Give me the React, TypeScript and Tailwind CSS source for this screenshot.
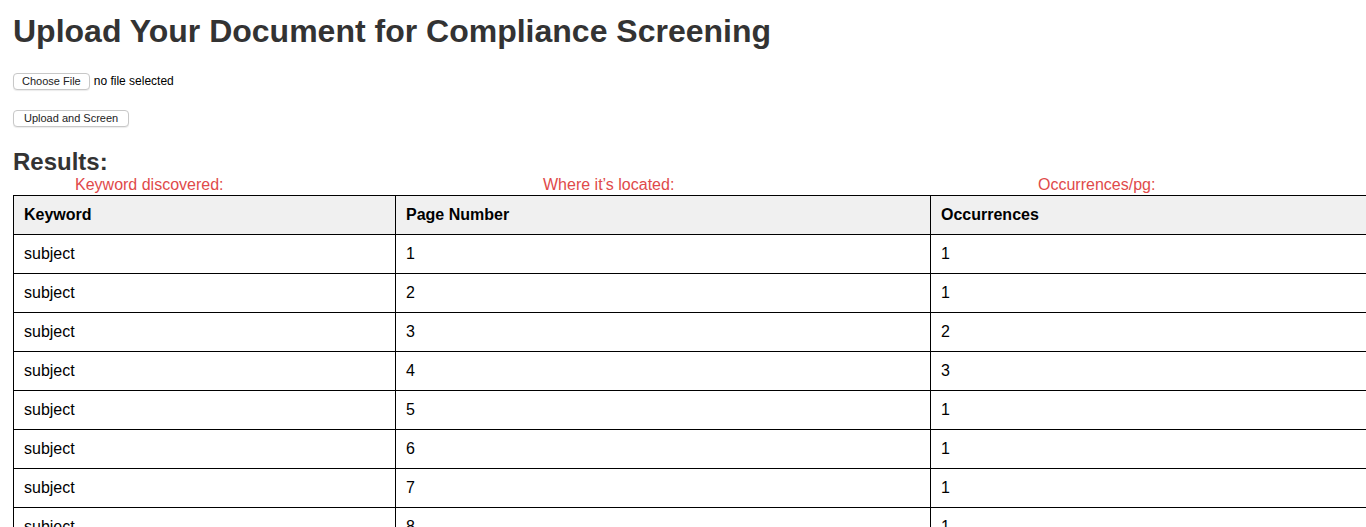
import React from "react"

const rows = [
  { keyword: "subject", page: 1, count: 1 },
  { keyword: "subject", page: 2, count: 1 },
  { keyword: "subject", page: 3, count: 2 },
  { keyword: "subject", page: 4, count: 3 },
  { keyword: "subject", page: 5, count: 1 },
  { keyword: "subject", page: 6, count: 1 },
  { keyword: "subject", page: 7, count: 1 },
  { keyword: "subject", page: 8, count: 1 },
]

const btn =
  "h-[17px] px-[8px] rounded-[4px] border border-[#c8c8c8] bg-white text-[11px] leading-none text-[#222] shadow-[0_1px_1px_rgba(0,0,0,0.08)]"

export default function App() {
  return (
    <div className="min-h-screen bg-white px-[13px] pt-[13px] text-[#333] font-['Liberation_Sans',Arial,sans-serif] overflow-hidden">
      <h1 className="text-[32px] font-bold leading-[37px] text-[#333]">
        Upload Your Document for Compliance Screening
      </h1>

      {/* file picker */}
      <div className="mt-[22px] flex items-center gap-[4px] text-[12px] text-black">
        <button className={btn}>Choose File</button>
        <span>no file selected</span>
      </div>

      <div className="mt-[15px]">
        <button className={`${btn} px-[10px] text-[11.5px]`}>Upload and Screen</button>
      </div>

      <h2 className="mt-[19px] text-[24px] font-bold leading-[28px] text-[#333]">Results:</h2>

      {/* annotations */}
      <div className="flex text-[16px] leading-[18px] text-[#e04a4a] mt-[0px]">
        <span className="ml-[62px] w-[468px]">Keyword discovered:</span>
        <span className="w-[495px]">Where it’s located:</span>
        <span>Occurrences/pg:</span>
      </div>

      <table className="mt-[1px] w-[1420px] border-collapse text-[16px] leading-[18px] text-black">
        <thead>
          <tr className="bg-[#f0f0f0]">
            <th className="w-[382px] border border-black px-[10px] py-[10px] text-left font-bold">Keyword</th>
            <th className="w-[535px] border border-black px-[10px] py-[10px] text-left font-bold">Page Number</th>
            <th className="border border-black px-[10px] py-[10px] text-left font-bold">Occurrences</th>
          </tr>
        </thead>
        <tbody>
          {rows.map((r) => (
            <tr key={r.page}>
              <td className="border border-black px-[10px] py-[10px]">{r.keyword}</td>
              <td className="border border-black px-[10px] py-[10px]">{r.page}</td>
              <td className="border border-black px-[10px] py-[10px]">{r.count}</td>
            </tr>
          ))}
        </tbody>
      </table>
    </div>
  )
}
